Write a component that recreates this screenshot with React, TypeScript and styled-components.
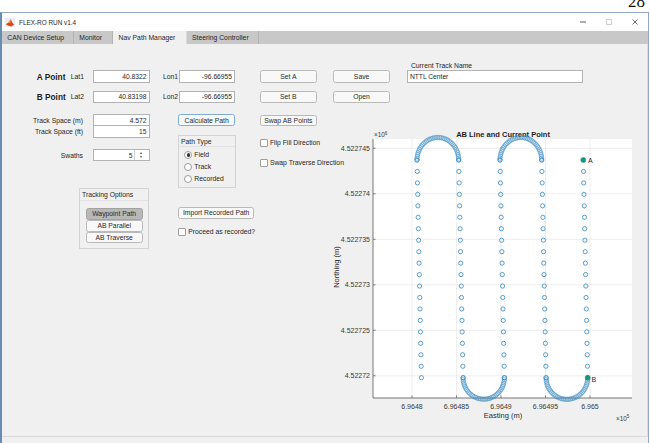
import React from "react";
import styled, { createGlobalStyle, css } from "styled-components";

const GlobalStyle = createGlobalStyle`
  html, body { margin: 0; padding: 0; background: #ffffff; }
  body { font-family: "Liberation Sans", Arial, sans-serif; color: #262626; }
  * { box-sizing: border-box; }
`;

const Page = styled.div`
  width: 650px;
  height: 443px;
  overflow: hidden;
  background: #ffffff;
  display: flex;
  flex-direction: column;
`;

const PageHeader = styled.div`
  height: 12px;
  flex: none;
  overflow: hidden;
  display: flex;
  justify-content: flex-end;
  padding-right: 5px;
`;

const PageNumber = styled.span`
  font-family: "Liberation Serif", "Times New Roman", serif;
  font-size: 17px;
  line-height: 17px;
  color: #111;
  margin-top: -7.5px;
`;

const Window = styled.div`
  flex: 1;
  width: 649px;
  display: flex;
  flex-direction: column;
  background: #f0f0f0;
  border-top: 1px solid #93a9c2;
  border-left: 2px solid #6b8cb1;
  border-right: 1px solid #8fa9c6;
  border-bottom: 2px solid #78abdc;
`;

const TitleBar = styled.div`
  height: 18px;
  flex: none;
  background: #ffffff;
  display: flex;
  align-items: center;
`;

const AppIcon = styled.svg`
  margin-left: 3px;
  flex: none;
`;

const TitleText = styled.span`
  margin-left: 4px;
  font-size: 6.4px;
  color: #1f1f1f;
  white-space: nowrap;
`;

const WindowControls = styled.div`
  margin-left: auto;
  display: flex;
  height: 100%;
`;

const ControlButton = styled.div`
  width: 26px;
  height: 100%;
  display: flex;
  align-items: center;
  justify-content: center;
`;

const TabBar = styled.div`
  height: 13px;
  flex: none;
  background: #c8c8c8;
  display: flex;
`;

const Tab = styled.div<{ $w: number; $active?: boolean }>`
  width: ${(p) => p.$w}px;
  height: 100%;
  padding-left: 5.3px;
  display: flex;
  align-items: center;
  font-size: 6.8px;
  color: #262626;
  white-space: nowrap;
  background: ${(p) => (p.$active ? "#f0f0f0" : "transparent")};
  border-right: 1px solid ${(p) => (p.$active ? "#dcdcdc" : "#b3b3b3")};
`;

const TabPanel = styled.div`
  flex: 1;
  margin-bottom: 8px;
  border-bottom: 1px solid #d9d9d9;
  border-right: 1px solid #dcdcdc;
  display: flex;
  flex-direction: column;
`;

/* ---------- top section ---------- */

const TopSection = styled.div`
  display: flex;
  margin-top: 17px;
  padding-left: 34.7px;
`;

const PointRows = styled.div`
  display: flex;
  flex-direction: column;
  gap: 7.7px;
  margin-top: 9px;
`;

const PointRow = styled.div<{ $h: number }>`
  display: flex;
  align-items: stretch;
  height: ${(p) => p.$h}px;
`;

const PointLabel = styled.div`
  width: 34px;
  font-size: 8.3px;
  font-weight: bold;
  color: #1e1e1e;
  display: flex;
  align-items: center;
  white-space: nowrap;
`;

const CoordLabel = styled.div<{ $w: number; $pad?: number }>`
  width: ${(p) => p.$w}px;
  padding-left: ${(p) => p.$pad ?? 0}px;
  font-size: 6.8px;
  display: flex;
  align-items: center;
  white-space: nowrap;
`;

const Field = styled.div<{ $w: number; $h?: number; $left?: boolean; $joined?: boolean }>`
  width: ${(p) => p.$w}px;
  ${(p) => p.$h !== undefined && css`height: ${p.$h}px;`}
  background: #ffffff;
  border: 1px solid #b3b3b3;
  ${(p) => p.$joined && css`border-top: none;`}
  font-size: 6.7px;
  color: #262626;
  display: flex;
  align-items: center;
  justify-content: ${(p) => (p.$left ? "flex-start" : "flex-end")};
  padding: ${(p) => (p.$left ? "0 0 0 2.3px" : "0 2.3px 0 0")};
  white-space: nowrap;
`;

const Button = styled.div<{ $w: number; $h: number; $ml?: number; $mt?: number; $pressed?: boolean; $focus?: boolean }>`
  width: ${(p) => p.$w}px;
  height: ${(p) => p.$h}px;
  margin-left: ${(p) => p.$ml ?? 0}px;
  margin-top: ${(p) => p.$mt ?? 0}px;
  flex: none;
  background: #f8f8f8;
  border: 1px solid #b9b9b9;
  border-radius: 2.5px;
  font-size: 6.8px;
  color: #2a2a2a;
  display: flex;
  align-items: center;
  justify-content: center;
  white-space: nowrap;
  ${(p) =>
    p.$pressed &&
    css`
      background: #b8b8b8;
      border-color: #a3a3a3;
    `}
  ${(p) =>
    p.$focus &&
    css`
      background: #f6f9fc;
      border-color: #82acd8;
    `}
`;

const TrackNameBlock = styled.div`
  margin-left: 16.7px;
  display: flex;
  flex-direction: column;
`;

const SmallLabel = styled.div`
  height: 9px;
  padding-left: 4.3px;
  font-size: 6.8px;
  display: flex;
  align-items: center;
  white-space: nowrap;
`;

/* ---------- bottom section ---------- */

const BottomRow = styled.div`
  display: flex;
  margin-top: 6.7px;
  flex: 1;
`;

const LeftControls = styled.div`
  width: 328px;
  flex: none;
  display: flex;
`;

const Column = styled.div<{ $w: number; $ml?: number }>`
  width: ${(p) => p.$w}px;
  margin-left: ${(p) => p.$ml ?? 0}px;
  flex: none;
  display: flex;
  flex-direction: column;
  align-items: flex-start;
`;

const FieldRow = styled.div<{ $h: number; $mt?: number }>`
  display: grid;
  grid-template-columns: 81px 57px;
  column-gap: 9.7px;
  height: ${(p) => p.$h}px;
  margin-top: ${(p) => p.$mt ?? 0}px;
`;

const FieldLabel = styled.div`
  font-size: 6.8px;
  display: flex;
  align-items: center;
  justify-content: flex-end;
  white-space: nowrap;
`;

const SpinValue = styled.div`
  flex: 1;
  text-align: right;
  padding-right: 2px;
`;

const SpinBox = styled.div`
  width: 12px;
  align-self: stretch;
  border-left: 1px solid #cfcfcf;
  display: flex;
  flex-direction: column;
  align-items: center;
  justify-content: center;
  gap: 2px;
`;

const Arrow = styled.div<{ $up?: boolean }>`
  width: 0;
  height: 0;
  border-left: 1.6px solid transparent;
  border-right: 1.6px solid transparent;
  ${(p) =>
    p.$up
      ? css`border-bottom: 2px solid #444;`
      : css`border-top: 2px solid #444;`}
`;

const Panel = styled.div<{ $w: number; $h: number; $mt?: number; $ml?: number }>`
  width: ${(p) => p.$w}px;
  height: ${(p) => p.$h}px;
  margin-top: ${(p) => p.$mt ?? 0}px;
  margin-left: ${(p) => p.$ml ?? 0}px;
  flex: none;
  border: 1px solid #d3d3d3;
  display: flex;
  flex-direction: column;
`;

const PanelTitle = styled.div<{ $h: number }>`
  height: ${(p) => p.$h}px;
  padding-left: 1.7px;
  font-size: 6.8px;
  display: flex;
  align-items: center;
  border-bottom: 1px solid #e2e2e2;
  white-space: nowrap;
`;

const RadioList = styled.div`
  display: flex;
  flex-direction: column;
  margin-top: 1.5px;
`;

const RadioRow = styled.div`
  height: 12px;
  padding-left: 5px;
  display: flex;
  align-items: center;
  font-size: 6.8px;
  white-space: nowrap;
`;

const RadioCircle = styled.div<{ $on?: boolean }>`
  width: 8px;
  height: 8px;
  border-radius: 50%;
  border: 1px solid #9d9d9d;
  background: #ffffff;
  margin-right: 2px;
  display: flex;
  align-items: center;
  justify-content: center;
  &::after {
    content: "";
    width: 3.4px;
    height: 3.4px;
    border-radius: 50%;
    background: ${(p) => (p.$on ? "#333" : "transparent")};
  }
`;

const ButtonStack = styled.div`
  display: flex;
  flex-direction: column;
  margin-top: 6.7px;
  margin-left: 5.4px;
`;

const CheckRow = styled.label<{ $mt?: number }>`
  display: flex;
  align-items: center;
  height: 8px;
  margin-top: ${(p) => p.$mt ?? 0}px;
  font-size: 6.8px;
  white-space: nowrap;
`;

const CheckBox = styled.span`
  width: 7.6px;
  height: 8px;
  flex: none;
  background: #ffffff;
  border: 1px solid #9e9e9e;
  border-radius: 1px;
  margin-right: 2.3px;
`;

const PlotArea = styled.div`
  width: 316px;
  flex: none;
`;

/* ---------- plot data ---------- */

const COL_TOP = [417, 458.7, 500, 541.7, 583.3];
const Y_TOP = 160;
const Y_BOT = 377.7;
const STEPS = 19;
const SHIFT = 4.4;
const colX = (c: number, y: number) => COL_TOP[c] + ((y - Y_TOP) / (Y_BOT - Y_TOP)) * SHIFT;

type Pt = { x: number; y: number };

const buildLines = (): Pt[] => {
  const pts: Pt[] = [];
  for (let c = 0; c < 5; c++) {
    for (let i = 0; i <= STEPS; i++) {
      const y = Y_TOP + (i * (Y_BOT - Y_TOP)) / STEPS;
      if (c === 4 && (i === 0 || i === STEPS)) continue;
      pts.push({ x: colX(c, y), y });
    }
  }
  return pts;
};

const buildArcs = (): Pt[] => {
  const pts: Pt[] = [];
  const arc = (c1: number, c2: number, top: boolean) => {
    const y0 = top ? Y_TOP : Y_BOT;
    const xa = colX(c1, y0);
    const xb = colX(c2, y0);
    const cx = (xa + xb) / 2;
    const r = (xb - xa) / 2;
    const ry = r * (top ? 1.08 : 1.04);
    const N = 38;
    for (let k = 0; k <= N; k++) {
      const t = (Math.PI * k) / N;
      pts.push({ x: cx - r * Math.cos(t), y: top ? y0 - ry * Math.sin(t) : y0 + ry * Math.sin(t) });
    }
  };
  arc(0, 1, true);
  arc(2, 3, true);
  arc(1, 2, false);
  arc(3, 4, false);
  return pts;
};

const LINE_PTS = buildLines();
const ARC_PTS = buildArcs();
const X_TICKS = [412, 456.5, 501, 545.5, 590];
const X_LABELS = ["6.9648", "6.96485", "6.9649", "6.96495", "6.965"];
const Y_TICKS = [148.3, 193.8, 239.3, 284.8, 330.3, 375.8];
const Y_LABELS = ["4.522745", "4.52274", "4.522735", "4.52273", "4.522725", "4.52272"];
const AX = { l: 373, r: 632, t: 139, b: 398 };
const A_PT = { x: colX(4, Y_TOP), y: Y_TOP };
const B_PT = { x: colX(4, Y_BOT), y: Y_BOT };

const Chart: React.FC = () => (
  <svg width={316} height={322} viewBox="330 110 316 322" fontFamily="'Liberation Sans', Arial, sans-serif">
    <rect x={AX.l} y={AX.t} width={AX.r - AX.l} height={AX.b - AX.t} fill="#ffffff" />
    {X_TICKS.map((x) => (
      <line key={`gx${x}`} x1={x} x2={x} y1={AX.t} y2={AX.b} stroke="#e6e6e6" strokeWidth={0.7} />
    ))}
    {Y_TICKS.map((y) => (
      <line key={`gy${y}`} x1={AX.l} x2={AX.r} y1={y} y2={y} stroke="#e6e6e6" strokeWidth={0.7} />
    ))}
    <line x1={AX.l} x2={AX.l} y1={AX.t} y2={AX.b} stroke="#555" strokeWidth={0.8} />
    <line x1={AX.l} x2={AX.r} y1={AX.b} y2={AX.b} stroke="#555" strokeWidth={0.8} />
    {X_TICKS.map((x, i) => (
      <g key={`xt${x}`}>
        <line x1={x} x2={x} y1={AX.b} y2={AX.b - 2.6} stroke="#555" strokeWidth={0.7} />
        <text x={x} y={409.2} fontSize={7} fill="#3a3a3a" textAnchor="middle">
          {X_LABELS[i]}
        </text>
      </g>
    ))}
    {Y_TICKS.map((y, i) => (
      <g key={`yt${y}`}>
        <line x1={AX.l} x2={AX.l + 2.6} y1={y} y2={y} stroke="#555" strokeWidth={0.7} />
        <text x={370} y={y + 2.5} fontSize={7} fill="#3a3a3a" textAnchor="end">
          {Y_LABELS[i]}
        </text>
      </g>
    ))}
    <text x={374} y={137.3} fontSize={6.4} fill="#3a3a3a">
      ×10<tspan dy={-2.6} fontSize={4.6}>6</tspan>
    </text>
    <text x={616} y={421} fontSize={6.4} fill="#3a3a3a">
      ×10<tspan dy={-2.6} fontSize={4.6}>5</tspan>
    </text>
    <text x={503} y={137} fontSize={7.5} fontWeight="bold" fill="#1f1f1f" textAnchor="middle">
      AB Line and Current Point
    </text>
    <text x={503} y={418.4} fontSize={7.5} fill="#2a2a2a" textAnchor="middle">
      Easting (m)
    </text>
    <text transform="translate(339.2 267) rotate(-90)" fontSize={7.5} fill="#2a2a2a" textAnchor="middle">
      Northing (m)
    </text>
    {ARC_PTS.map((p, i) => (
      <circle key={`a${i}`} cx={p.x} cy={p.y} r={2.2} fill="none" stroke="#3a8cc5" strokeWidth={0.55} />
    ))}
    {LINE_PTS.map((p, i) => (
      <circle key={`l${i}`} cx={p.x} cy={p.y} r={2.1} fill="none" stroke="#2f86c1" strokeWidth={0.8} />
    ))}
    <circle cx={A_PT.x} cy={A_PT.y} r={2.5} fill="#17977e" stroke="#17977e" strokeWidth={0.6} />
    <circle cx={B_PT.x} cy={B_PT.y} r={2.5} fill="#17977e" stroke="#17977e" strokeWidth={0.6} />
    <text x={588} y={162.8} fontSize={7} fill="#2a2a2a">
      A
    </text>
    <text x={591.5} y={381.6} fontSize={7} fill="#2a2a2a">
      B
    </text>
  </svg>
);

const App: React.FC = () => (
  <>
    <GlobalStyle />
    <Page>
      <PageHeader>
        <PageNumber>28</PageNumber>
      </PageHeader>
      <Window>
        <TitleBar>
          <AppIcon width="10" height="9" viewBox="0 0 10 9">
            <rect x="0" y="0" width="10" height="9" fill="#e8ecf1" />
            <path d="M0.8 6.2 L3.6 4.6 L5.6 1.2 L7.6 5 L9.2 6.4 L6.4 8.4 L3.4 7.8 Z" fill="#d8471c" />
            <path d="M3.6 4.6 L5.6 1.2 L5.4 5.2 Z" fill="#f2a43a" />
          </AppIcon>
          <TitleText>FLEX-RO RUN v1.4</TitleText>
          <WindowControls>
            <ControlButton>
              <svg width="6" height="2" viewBox="0 0 6 2">
                <line x1="0" y1="1" x2="6" y2="1" stroke="#333" strokeWidth="0.8" />
              </svg>
            </ControlButton>
            <ControlButton>
              <svg width="6" height="6" viewBox="0 0 6 6">
                <rect x="0.5" y="0.5" width="5" height="5" fill="none" stroke="#c4c4c4" strokeWidth="0.8" />
              </svg>
            </ControlButton>
            <ControlButton>
              <svg width="6" height="6" viewBox="0 0 6 6">
                <path d="M0.5 0.5 L5.5 5.5 M5.5 0.5 L0.5 5.5" stroke="#333" strokeWidth="0.7" />
              </svg>
            </ControlButton>
          </WindowControls>
        </TitleBar>
        <TabBar>
          <Tab $w={72}>CAN Device Setup</Tab>
          <Tab $w={39.3}>Monitor</Tab>
          <Tab $w={73.4} $active>
            Nav Path Manager
          </Tab>
          <Tab $w={72.6}>Steering Controller</Tab>
        </TabBar>
        <TabPanel>
          <TopSection>
            <PointRows>
              <PointRow $h={13}>
                <PointLabel>A Point</PointLabel>
                <CoordLabel $w={22}>Lat1</CoordLabel>
                <Field $w={57}>40.8322</Field>
                <CoordLabel $w={29} $pad={13.3}>
                  Lon1
                </CoordLabel>
                <Field $w={56.6}>-96.66955</Field>
                <Button $w={56.7} $h={13} $ml={24.7}>
                  Set A
                </Button>
                <Button $w={56.7} $h={13} $ml={16.6}>
                  Save
                </Button>
              </PointRow>
              <PointRow $h={12.6}>
                <PointLabel>B Point</PointLabel>
                <CoordLabel $w={22}>Lat2</CoordLabel>
                <Field $w={57}>40.83198</Field>
                <CoordLabel $w={29} $pad={13.3}>
                  Lon2
                </CoordLabel>
                <Field $w={56.6}>-96.66955</Field>
                <Button $w={56.7} $h={12.6} $ml={24.7}>
                  Set B
                </Button>
                <Button $w={56.7} $h={12.6} $ml={16.6}>
                  Open
                </Button>
              </PointRow>
            </PointRows>
            <TrackNameBlock>
              <SmallLabel>Current Track Name</SmallLabel>
              <Field $w={176} $h={12.7} $left>
                NTTL Center
              </Field>
            </TrackNameBlock>
          </TopSection>

          <BottomRow>
            <LeftControls>
              <Column $w={148}>
                <FieldRow $h={11.7} $mt={4.3}>
                  <FieldLabel>Track Space (m)</FieldLabel>
                  <Field $w={57}>4.572</Field>
                </FieldRow>
                <FieldRow $h={12}>
                  <FieldLabel>Track Space (ft)</FieldLabel>
                  <Field $w={57} $joined>
                    15
                  </Field>
                </FieldRow>
                <FieldRow $h={11.7} $mt={11.3}>
                  <FieldLabel>Swaths</FieldLabel>
                  <Field $w={57}>
                    <SpinValue>5</SpinValue>
                    <SpinBox>
                      <Arrow $up />
                      <Arrow />
                    </SpinBox>
                  </Field>
                </FieldRow>
                <Panel $w={70} $h={60.7} $mt={27.3} $ml={77.3}>
                  <PanelTitle $h={11.7}>Tracking Options</PanelTitle>
                  <ButtonStack>
                    <Button $w={57} $h={12.2} $pressed>
                      Waypoint Path
                    </Button>
                    <Button $w={57} $h={11.8}>
                      AB Parallel
                    </Button>
                    <Button $w={57} $h={11.7}>
                      AB Traverse
                    </Button>
                  </ButtonStack>
                </Panel>
              </Column>

              <Column $w={76} $ml={28.3}>
                <Button $w={56.7} $h={11.8} $mt={4.5} $focus>
                  Calculate Path
                </Button>
                <Panel $w={57.3} $h={53.3} $mt={8.7}>
                  <PanelTitle $h={11.5}>Path Type</PanelTitle>
                  <RadioList>
                    <RadioRow>
                      <RadioCircle $on />
                      Field
                    </RadioRow>
                    <RadioRow>
                      <RadioCircle />
                      Track
                    </RadioRow>
                    <RadioRow>
                      <RadioCircle />
                      Recorded
                    </RadioRow>
                  </RadioList>
                </Panel>
                <Button $w={75.7} $h={12.3} $mt={18.4}>
                  Import Recorded Path
                </Button>
                <CheckRow $mt={8.7}>
                  <CheckBox />
                  Proceed as recorded?
                </CheckRow>
              </Column>

              <Column $w={70} $ml={5.7}>
                <Button $w={56.7} $h={11.3} $mt={5}>
                  Swap AB Points
                </Button>
                <CheckRow $mt={12.7}>
                  <CheckBox />
                  Flip Fill Direction
                </CheckRow>
                <CheckRow $mt={11.7}>
                  <CheckBox />
                  Swap Traverse Direction
                </CheckRow>
              </Column>
            </LeftControls>
            <PlotArea>
              <Chart />
            </PlotArea>
          </BottomRow>
        </TabPanel>
      </Window>
    </Page>
  </>
);

export default App;
